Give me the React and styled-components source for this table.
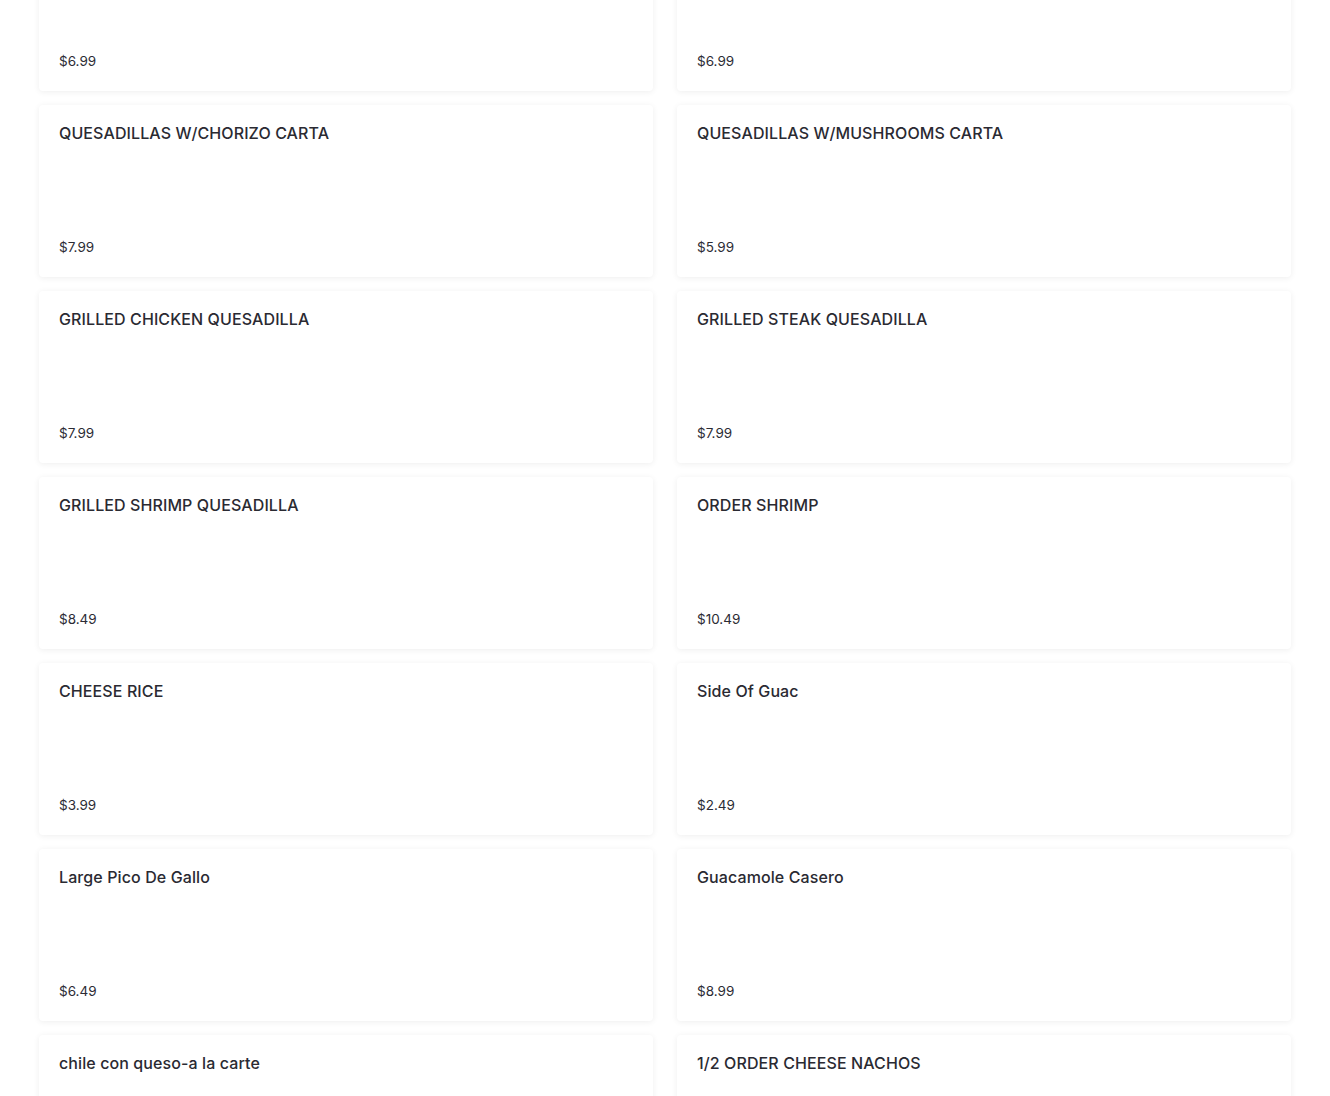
import styled, { createGlobalStyle } from 'styled-components';

const GlobalStyle = createGlobalStyle`
  html, body {
    margin: 0;
    padding: 0;
    background: #ffffff;
    overflow: hidden;
  }
  body {
    font-family: 'Inter', 'Liberation Sans', sans-serif;
    color: #2c2c34;
  }
`;

const Page = styled.div`
  height: 1096px;
  overflow: hidden;
`;

const Grid = styled.div`
  display: grid;
  grid-template-columns: 1fr 1fr;
  column-gap: 24px;
  row-gap: 14px;
  padding: 0 39px;
  margin-top: -81px;
`;

const Card = styled.div`
  display: flex;
  flex-direction: column;
  height: 172px;
  box-sizing: border-box;
  padding: 17px 20px 21px;
  background: #ffffff;
  border-radius: 4px;
  box-shadow: 0 1px 6px rgba(0, 0, 0, 0.07);
`;

const Title = styled.div`
  font-size: 16px;
  font-weight: 500;
  line-height: 22px;
  letter-spacing: 0.1px;
  color: #2a2a32;
`;

const Price = styled.div`
  margin-top: auto;
  font-size: 13.5px;
  line-height: 18px;
  color: #2c2c34;
`;

const items = [
  { name: '', price: '$6.99' },
  { name: '', price: '$6.99' },
  { name: 'QUESADILLAS W/CHORIZO CARTA', price: '$7.99' },
  { name: 'QUESADILLAS W/MUSHROOMS CARTA', price: '$5.99' },
  { name: 'GRILLED CHICKEN QUESADILLA', price: '$7.99' },
  { name: 'GRILLED STEAK QUESADILLA', price: '$7.99' },
  { name: 'GRILLED SHRIMP QUESADILLA', price: '$8.49' },
  { name: 'ORDER SHRIMP', price: '$10.49' },
  { name: 'CHEESE RICE', price: '$3.99' },
  { name: 'Side Of Guac', price: '$2.49' },
  { name: 'Large Pico De Gallo', price: '$6.49' },
  { name: 'Guacamole Casero', price: '$8.99' },
  { name: 'chile con queso-a la carte', price: '' },
  { name: '1/2 ORDER CHEESE NACHOS', price: '' },
];

const App = () => (
  <Page>
    <GlobalStyle />
    <Grid>
      {items.map((item, i) => (
        <Card key={i}>
          <Title>{item.name}</Title>
          {item.price && <Price>{item.price}</Price>}
        </Card>
      ))}
    </Grid>
  </Page>
);

export default App;
